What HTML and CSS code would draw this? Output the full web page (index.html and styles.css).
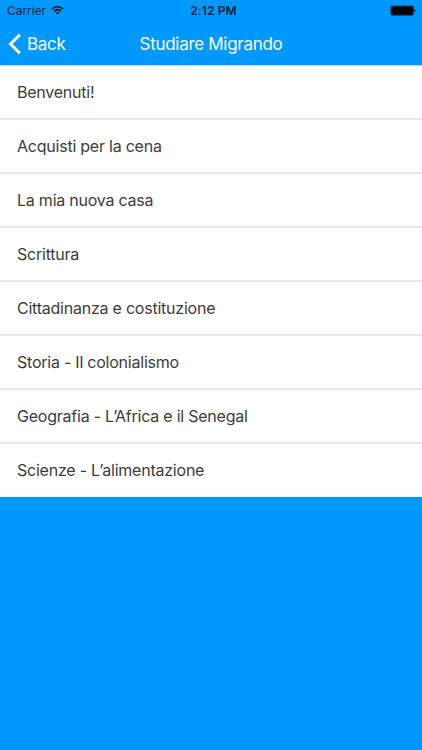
FILE: index.html
```html
<!DOCTYPE html>
<html lang="it">
<head>
<meta charset="utf-8">
<title>Studiare Migrando</title>
<link rel="stylesheet" href="styles.css">
</head>
<body>
<header>
  <div class="status">
    <div class="carrier"><span>Carrier</span>
      <svg class="wifi" width="13" height="10" viewBox="0 0 14 10" fill="none" stroke="#001c33" stroke-width="1.9"><path d="M1 3.9Q7-1.2 13 3.9M3.2 6.4Q7 3 10.8 6.4"/><path d="M4.7 7.7Q7 5.8 9.3 7.7L7 10Z" fill="#001c33" stroke="none"/></svg>
    </div>
    <div class="clock">2:12 PM</div>
    <svg class="battery" width="26" height="11" viewBox="0 0 26 11"><rect x=".9" y=".9" width="22.6" height="9.4" rx="1" fill="#000" stroke="#00447a" stroke-width=".8"/><path d="M24.2 3.9q1.3.2 1.3 1.7T24.2 7.3Z" fill="#002d52"/></svg>
  </div>
  <nav class="bar">
    <a class="back"><svg width="14" height="22" viewBox="0 0 14 22" fill="none" stroke="#fff" stroke-width="3"><path d="M12 1.6L2.6 11L12 20.4"/></svg><span>Back</span></a>
    <h1>Studiare Migrando</h1>
  </nav>
</header>
<ul class="list">
  <li>Benvenuti!</li>
  <li>Acquisti per la cena</li>
  <li>La mia nuova casa</li>
  <li>Scrittura</li>
  <li>Cittadinanza e costituzione</li>
  <li>Storia - Il colonialismo</li>
  <li>Geografia - L’Africa e il Senegal</li>
  <li>Scienze - L’alimentazione</li>
</ul>
</body>
</html>
```
FILE: styles.css
```css
* { box-sizing: border-box; }
body {
  margin: 0;
  min-height: 750px;
  background: #0099ff;
  font-family: Inter, "Liberation Sans", sans-serif;
}
header { height: 66px; border-bottom: 1px solid #b3dfff; }
.status {
  display: grid;
  grid-template-columns: 1fr auto 1fr;
  align-items: center;
  height: 21px;
  padding: 0 6px 0 7px;
  color: #001c33;
  font-size: 12px;
}
.carrier { display: flex; align-items: center; gap: 5px; letter-spacing: -0.05px; }
.wifi { margin-top: -1px; }
.clock { padding-left: 4px; font-weight: 600; letter-spacing: 0.1px; }
.battery { justify-self: end; }
.bar {
  display: grid;
  grid-template-columns: 1fr auto 1fr;
  align-items: center;
  height: 45px;
  padding: 0 8px;
  color: #fff;
}
.back { display: flex; align-items: center; gap: 5px; font-size: 17px; letter-spacing: -0.3px; }
h1 { margin: 0; font-size: 17px; font-weight: 400; letter-spacing: -0.3px; }
.list { margin: 0; padding: 0; list-style: none; background: #fff; }
.list li {
  display: flex;
  align-items: center;
  height: 54px;
  padding-left: 17px;
  border-bottom: 2px solid #e9e9e9;
  color: #3c3c3c;
  font-size: 16px;
  letter-spacing: -0.23px;
}
.list li:last-child { height: 53px; border-bottom: 1px solid #fff; }
```
